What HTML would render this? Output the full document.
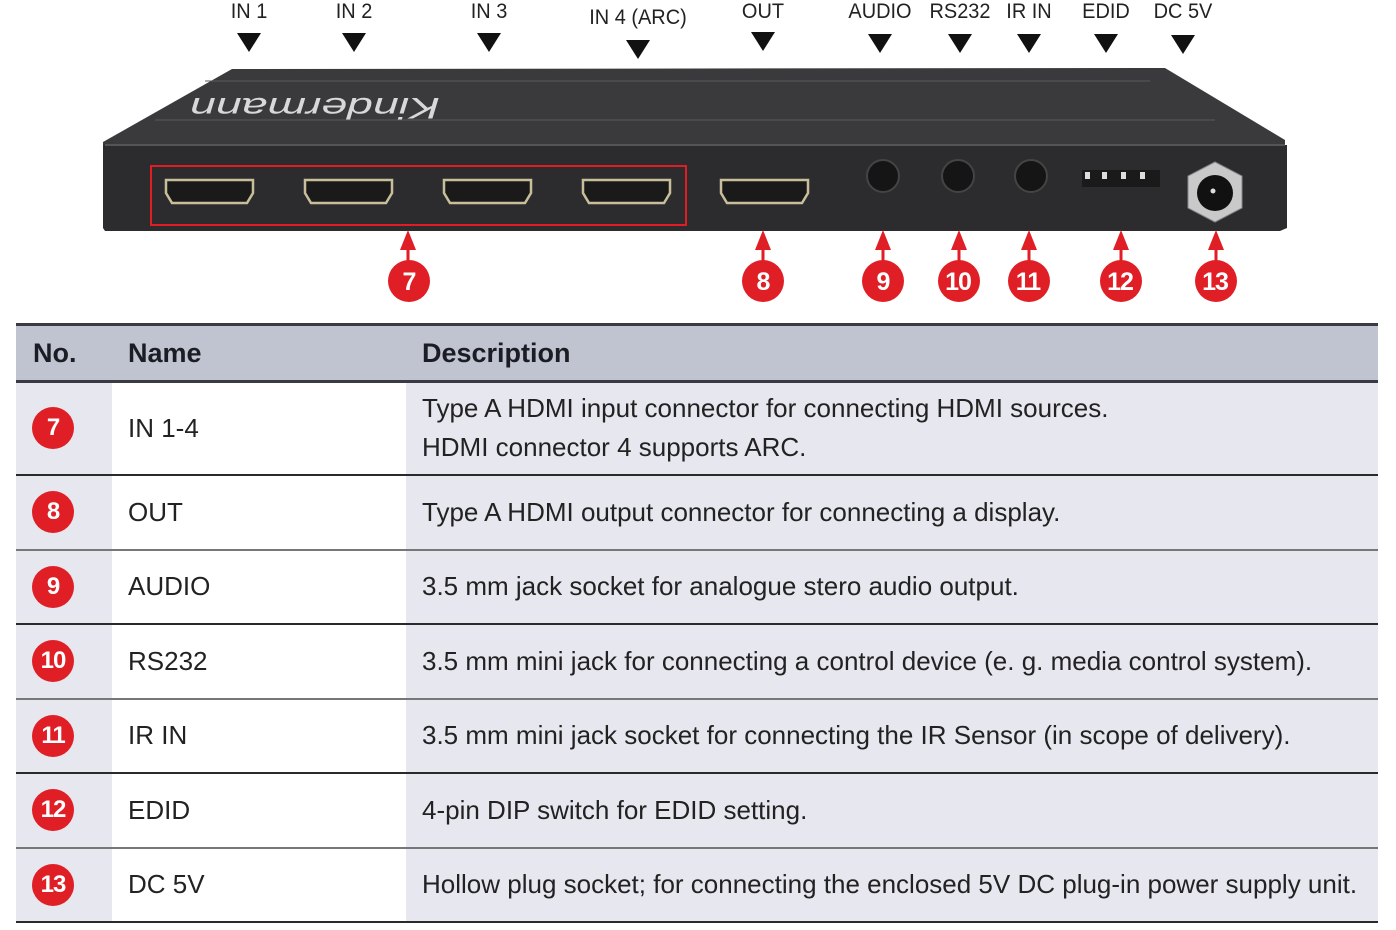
<!DOCTYPE html>
<html><head><meta charset="utf-8">
<style>
*{margin:0;padding:0;box-sizing:border-box}
body{width:1396px;height:930px;background:#fff;font-family:"Liberation Sans",sans-serif;color:#222;position:relative;overflow:hidden}
.lbl{position:absolute;font-size:21px;color:#222;transform:scaleX(0.95);transform-origin:center;white-space:nowrap;text-align:center;width:120px;margin-left:-60px}
table{position:absolute;left:16px;top:323px;width:1362px;border-collapse:collapse}
td,th{text-align:left;vertical-align:middle;padding:0}
th{background:#c0c3d0;height:57px;font-size:27px;font-weight:bold;color:#1c1c24;border-top:3px solid #3a3a44;border-bottom:3px solid #3a3a44}
td{font-size:26px;color:#222;border-bottom:2px solid #2a2a2a}
td.c1{background:#e6e7ef;width:96px}
td.c2{background:#fff;width:294px;padding-left:16px}
td.c3{background:#e6e7ef;padding-left:16px}
th.h1{padding-left:17px}th.h2{padding-left:16px}th.h3{padding-left:16px}
.t{display:inline-block;transform:scaleX(1.0);transform-origin:left;white-space:nowrap;line-height:39px}
.b{width:42px;height:42px;border-radius:50%;background:#e01e25;color:#fff;font-weight:bold;font-size:24px;display:flex;align-items:center;justify-content:center;margin-left:16px;letter-spacing:-1px}
tr.g td{border-bottom-color:#777}
</style></head><body>
<div class="lbl" style="left:249px;top:0">IN 1</div>
<div class="lbl" style="left:354px;top:0">IN 2</div>
<div class="lbl" style="left:489px;top:0">IN 3</div>
<div class="lbl" style="left:638px;top:6px">IN 4 (ARC)</div>
<div class="lbl" style="left:763px;top:0">OUT</div>
<div class="lbl" style="left:880px;top:0">AUDIO</div>
<div class="lbl" style="left:960px;top:0">RS232</div>
<div class="lbl" style="left:1029px;top:0">IR IN</div>
<div class="lbl" style="left:1106px;top:0">EDID</div>
<div class="lbl" style="left:1183px;top:0">DC 5V</div>
<svg width="1396" height="320" style="position:absolute;left:0;top:0">
<g fill="#111">
<polygon points="237,33 261,33 249,52"/><polygon points="342,33 366,33 354,52"/><polygon points="477,33 501,33 489,52"/><polygon points="626,40 650,40 638,59"/><polygon points="751,32 775,32 763,51"/><polygon points="868,34 892,34 880,53"/><polygon points="948,34 972,34 960,53"/><polygon points="1017,34 1041,34 1029,53"/><polygon points="1094,34 1118,34 1106,53"/><polygon points="1171,35 1195,35 1183,54"/>
</g>
<polygon points="232,69 1165,68 1285,140 1285,147 103,147 103,142" fill="#3a3a3d"/>
<polygon points="103,145 1287,145 1287,228 1280,231 105,231 103,228" fill="#2c2c2e"/>
<line x1="105" y1="145" x2="1285" y2="145" stroke="#555" stroke-width="2"/>
<line x1="205" y1="81" x2="1150" y2="81" stroke="#5a5a5d"/>
<line x1="155" y1="120" x2="1215" y2="120" stroke="#5a5a5d"/>
<text x="190" y="118" fill="#d8d8d8" font-size="30" font-style="italic" textLength="250" lengthAdjust="spacingAndGlyphs" transform="rotate(180 315 108)">Kindermann</text>
<rect x="151" y="166" width="535" height="59" fill="none" stroke="#e21c24" stroke-width="2"/>
<g fill="#1a1a1a" stroke="#c8bf9a" stroke-width="2.5">
<path d="M166,180 h87 v13 l-6,10 h-75 l-6,-10z"/>
<path d="M305,180 h87 v13 l-6,10 h-75 l-6,-10z"/>
<path d="M444,180 h87 v13 l-6,10 h-75 l-6,-10z"/>
<path d="M583,180 h87 v13 l-6,10 h-75 l-6,-10z"/>
<path d="M721,180 h87 v13 l-6,10 h-75 l-6,-10z"/>
</g>
<g fill="#151515" stroke="#444" stroke-width="2">
<circle cx="883" cy="176" r="16"/><circle cx="958" cy="176" r="16"/><circle cx="1031" cy="176" r="16"/>
</g>
<rect x="1082" y="170" width="78" height="17" fill="#1a1a1a"/>
<g fill="#ddd"><rect x="1085" y="172" width="5" height="7"/><rect x="1102" y="172" width="5" height="7"/><rect x="1121" y="172" width="5" height="7"/><rect x="1140" y="172" width="5" height="7"/></g>
<polygon points="1215,162 1242,176 1242,208 1215,222 1188,208 1188,176" fill="#c9c9c9" stroke="#888"/>
<circle cx="1215" cy="193" r="18" fill="#111"/>
<circle cx="1213" cy="191" r="2.5" fill="#ddd"/>
<g stroke="#e01e25" stroke-width="3" fill="#e01e25">
<line x1="408" y1="245" x2="408" y2="262"/><polygon points="400,250 416,250 408,230" stroke="none"/>
<line x1="763" y1="245" x2="763" y2="262"/><polygon points="755,250 771,250 763,230" stroke="none"/>
<line x1="883" y1="245" x2="883" y2="262"/><polygon points="875,250 891,250 883,230" stroke="none"/>
<line x1="959" y1="245" x2="959" y2="262"/><polygon points="951,250 967,250 959,230" stroke="none"/>
<line x1="1029" y1="245" x2="1029" y2="262"/><polygon points="1021,250 1037,250 1029,230" stroke="none"/>
<line x1="1121" y1="245" x2="1121" y2="262"/><polygon points="1113,250 1129,250 1121,230" stroke="none"/>
<line x1="1216" y1="245" x2="1216" y2="262"/><polygon points="1208,250 1224,250 1216,230" stroke="none"/>
</g>
<g fill="#e01e25"><circle cx="409" cy="281" r="21"/><circle cx="763" cy="281" r="21"/><circle cx="883" cy="281" r="21"/><circle cx="959" cy="281" r="21"/><circle cx="1029" cy="281" r="21"/><circle cx="1121" cy="281" r="21"/><circle cx="1216" cy="281" r="21"/></g>
<g fill="#fff" font-size="25" font-weight="bold" text-anchor="middle" font-family="Liberation Sans,sans-serif" letter-spacing="-1">
<text x="409" y="290">7</text><text x="763" y="290">8</text><text x="883" y="290">9</text><text x="958" y="290">10</text><text x="1028" y="290">11</text><text x="1120" y="290">12</text><text x="1215" y="290">13</text>
</g>
</svg>
<table>
<tr><th class="h1" style="width:96px">No.</th><th class="h2">Name</th><th class="h3">Description</th></tr>
<tr style="height:93px"><td class="c1"><div class="b">7</div></td><td class="c2"><span class="t">IN 1-4</span></td><td class="c3"><span class="t">Type A HDMI input connector for connecting HDMI sources.<br>HDMI connector 4 supports ARC.</span></td></tr>
<tr class="g" style="height:75px"><td class="c1"><div class="b">8</div></td><td class="c2"><span class="t">OUT</span></td><td class="c3"><span class="t">Type A HDMI output connector for connecting a display.</span></td></tr>
<tr style="height:74px"><td class="c1"><div class="b">9</div></td><td class="c2"><span class="t">AUDIO</span></td><td class="c3"><span class="t">3.5 mm jack socket for analogue stero audio output.</span></td></tr>
<tr class="g" style="height:75px"><td class="c1"><div class="b">10</div></td><td class="c2"><span class="t">RS232</span></td><td class="c3"><span class="t">3.5 mm mini jack for connecting a control device (e. g. media control system).</span></td></tr>
<tr style="height:74px"><td class="c1"><div class="b">11</div></td><td class="c2"><span class="t">IR IN</span></td><td class="c3"><span class="t">3.5 mm mini jack socket for connecting the IR Sensor (in scope of delivery).</span></td></tr>
<tr class="g" style="height:75px"><td class="c1"><div class="b">12</div></td><td class="c2"><span class="t">EDID</span></td><td class="c3"><span class="t">4-pin DIP switch for EDID setting.</span></td></tr>
<tr style="height:74px"><td class="c1"><div class="b">13</div></td><td class="c2"><span class="t">DC 5V</span></td><td class="c3"><span class="t">Hollow plug socket; for connecting the enclosed 5V DC plug-in power supply unit.</span></td></tr>
</table>
</body></html>
